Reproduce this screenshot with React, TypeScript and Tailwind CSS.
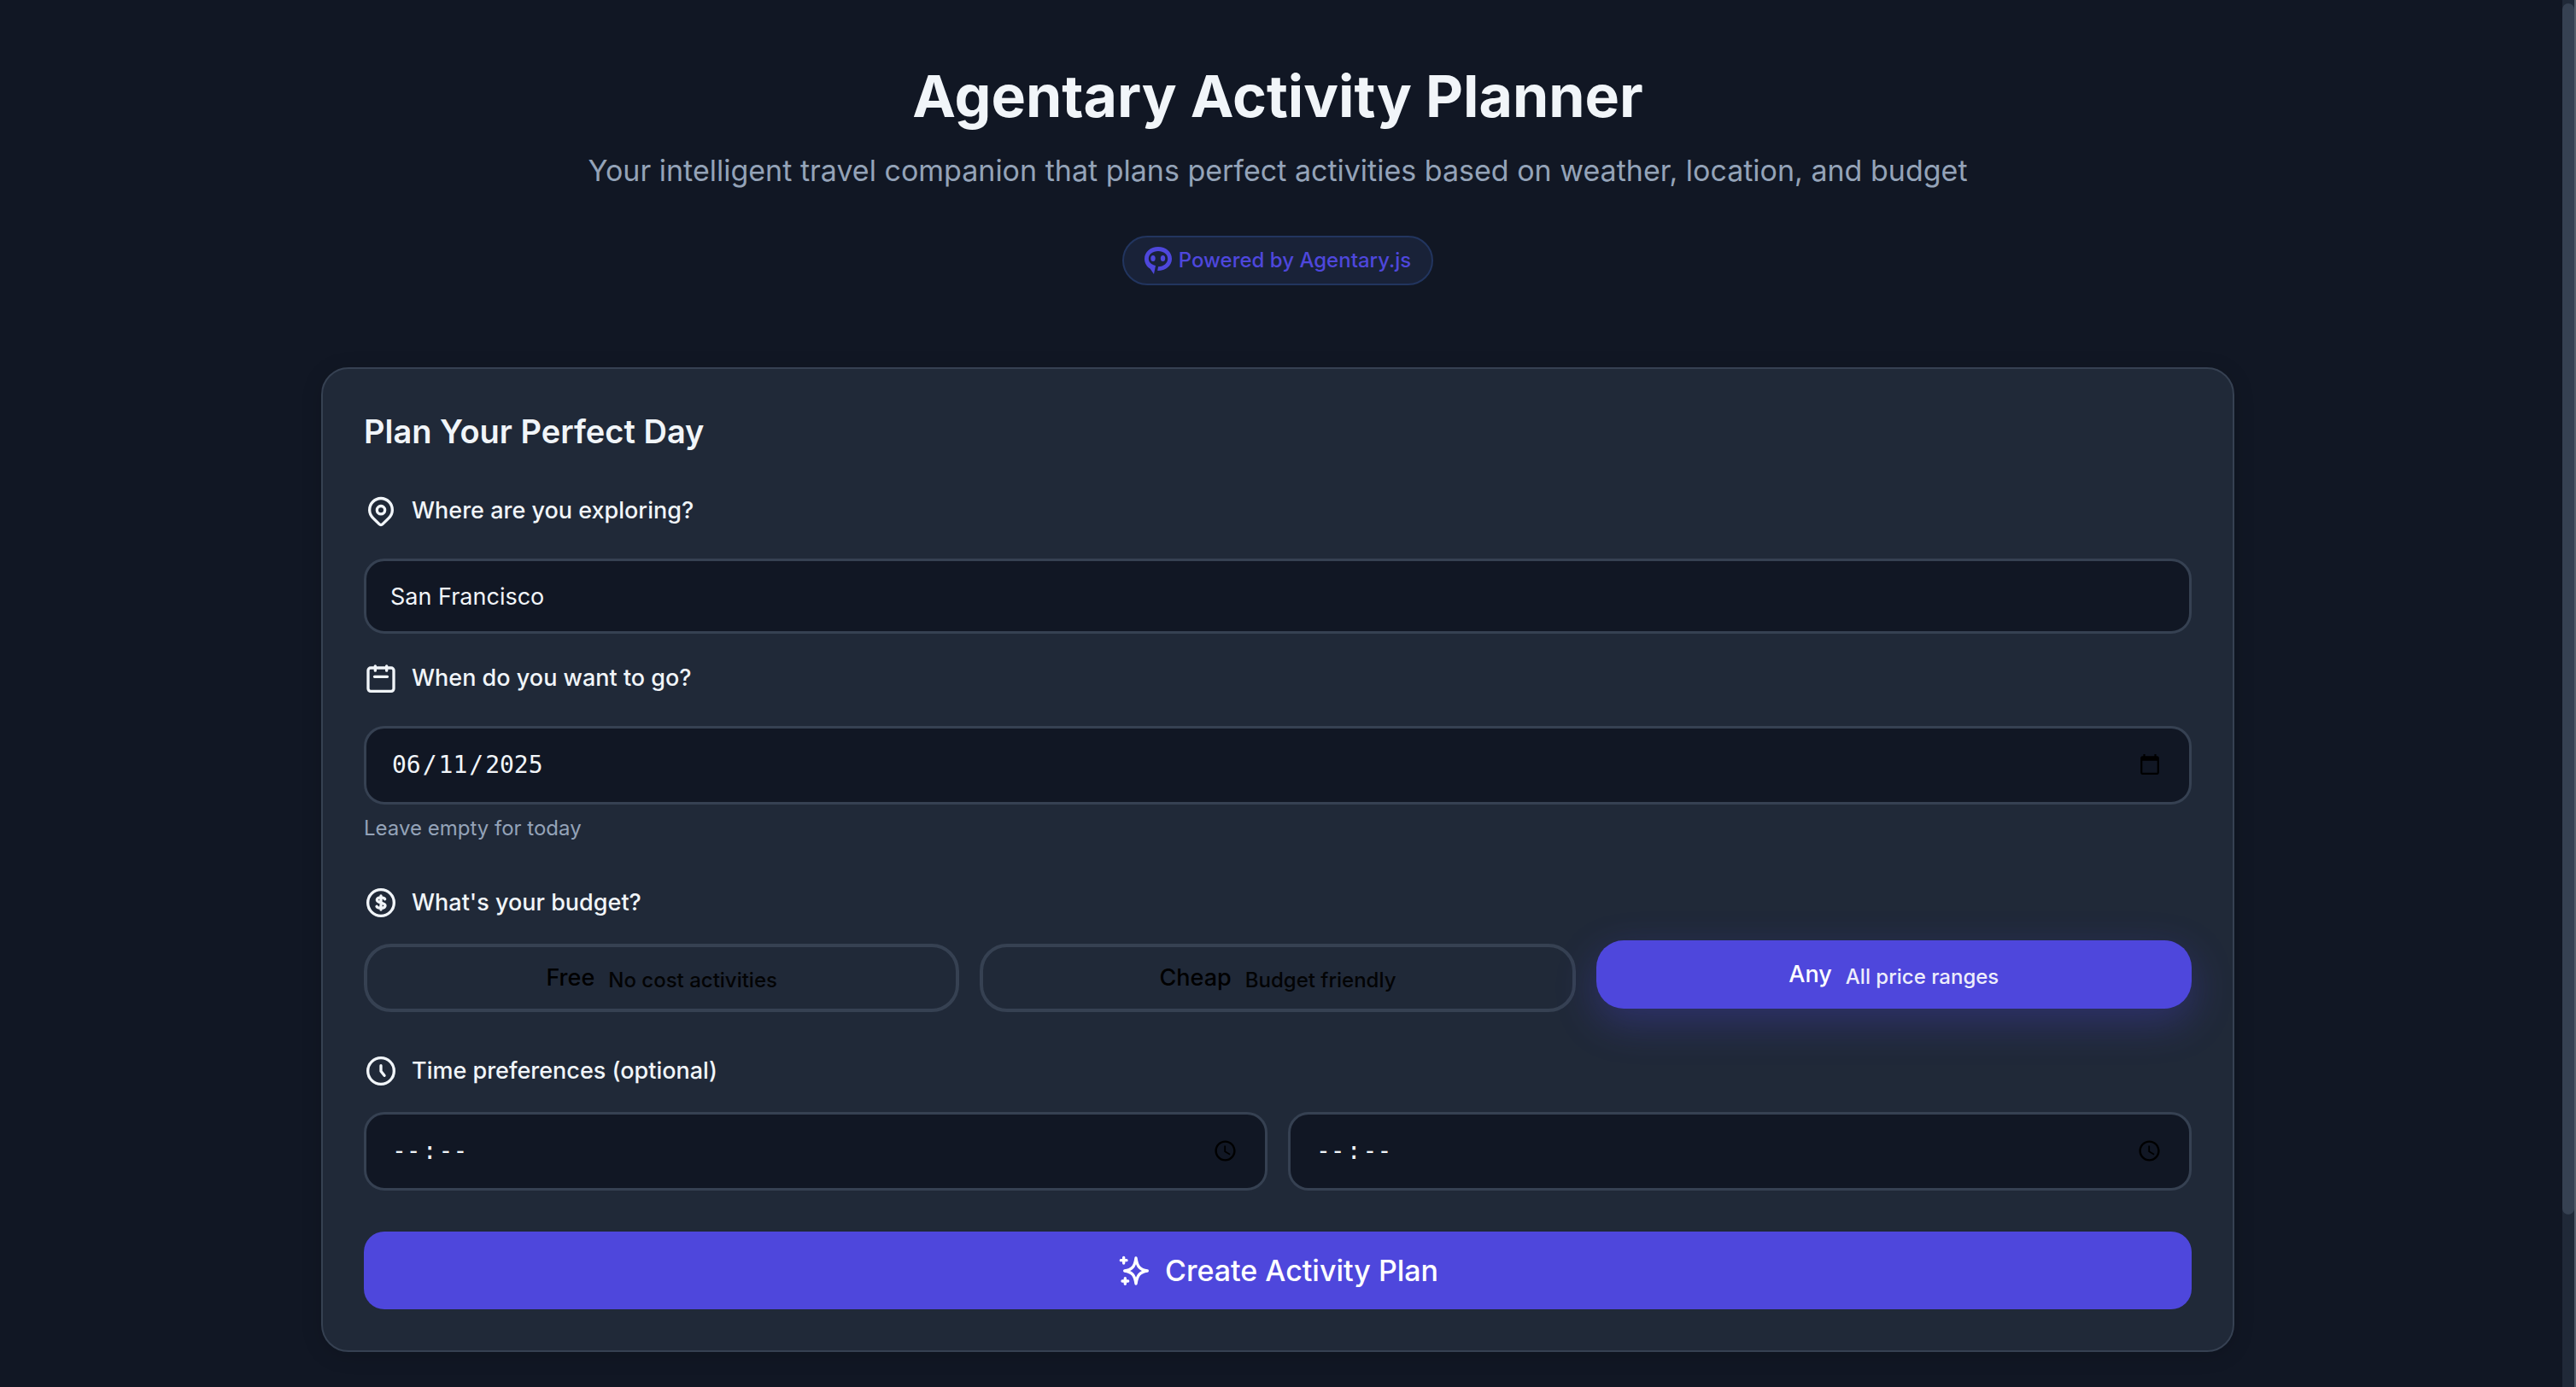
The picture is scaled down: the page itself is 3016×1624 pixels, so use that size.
import React, { useState } from "react";

const budgets = [
  { id: "free", name: "Free", note: "No cost activities" },
  { id: "cheap", name: "Cheap", note: "Budget friendly" },
  { id: "any", name: "Any", note: "All price ranges" },
];

const field =
  "block w-full rounded-[24px] border-[3px] border-[#364152] bg-[#111724] px-7 leading-8 text-[#f1f5f9] outline-none";
const mono =
  "h-[92px] text-[28px] font-['DejaVu_Sans_Mono',monospace] [&::-webkit-datetime-edit-ampm-field]:hidden [&::-webkit-calendar-picker-indicator]:p-1 [&::-webkit-datetime-edit-fields-wrapper]:p-0 [&::-webkit-datetime-edit-month-field]:px-[2px] [&::-webkit-datetime-edit-day-field]:px-[2px] [&::-webkit-datetime-edit-year-field]:px-[2px] [&::-webkit-datetime-edit-hour-field]:px-[2px] [&::-webkit-datetime-edit-minute-field]:px-[2px]";
const labelText = "flex items-center gap-4 text-[27px] leading-10 font-medium";

function Icon({ children }: { children: React.ReactNode }) {
  return (
    <svg
      className="size-10 shrink-0"
      viewBox="0 0 24 24"
      fill="none"
      stroke="currentColor"
      strokeWidth="2"
      strokeLinecap="round"
      strokeLinejoin="round"
      aria-hidden="true"
    >
      {children}
    </svg>
  );
}

function Header() {
  return (
    <header className="flex flex-col items-center text-center">
      <h1 className="text-[68px] leading-[80px] font-bold">Agentary Activity Planner</h1>
      <p className="mt-5 text-[34px] leading-[56px] text-[#94a3b8]">
        Your intelligent travel companion that plans perfect activities based on weather, location, and budget
      </p>
      <a
        href="#agentary"
        className="mt-12 flex h-[58px] items-center gap-2 rounded-full border-2 border-[#22355f] bg-[#192238] px-6 text-[24px] leading-8 font-medium text-[#4e47dc]"
      >
        <svg className="size-8" viewBox="0 0 32 32" fill="none" aria-hidden="true">
          <path
            d="M16 0C7 0 0 6 0 14c0 5.600 3 9.400 6.500 11.600L11 32l2-10C8 21 4.800 18 4.800 13.800 4.800 8.800 9.800 5 16 5s11.200 3.700 11.200 8.900c0 5.100-4.600 9-11.200 9.300l-.8 4.900C24.800 28.200 32 22 32 14S25 0 16 0Z"
            fill="currentColor"
          />
          <ellipse cx="10" cy="13.500" rx="2.700" ry="3.600" fill="currentColor" />
          <ellipse cx="21.500" cy="13.500" rx="2.700" ry="3.600" fill="currentColor" />
        </svg>
        Powered by Agentary.js
      </a>
    </header>
  );
}

function PlannerForm() {
  const [place, setPlace] = useState("San Francisco");
  const [date, setDate] = useState("2025-06-11");
  const [budget, setBudget] = useState("any");

  return (
    <form
      className="mt-24 w-full max-w-[2240px] rounded-[32px] border-2 border-[#364152] bg-[#202938] p-12 shadow-[0_4px_24px_rgba(0,0,0,0.15)]"
      onSubmit={(e) => e.preventDefault()}
    >
      <h2 className="text-[38px] leading-[50px] font-semibold">Plan Your Perfect Day</h2>

      <label htmlFor="place" className={`${labelText} mt-12`}>
        <Icon>
          <path d="M20 11.500c0 2.400-1.100 4.300-2.800 6l-4 3.900a1.700 1.700 0 0 1-2.400 0l-4-3.900C5.100 15.800 4 13.900 4 11.500a8 8.200 0 0 1 16 0Z" />
          <circle cx="12" cy="11.500" r="2.800" />
        </Icon>
        Where are you exploring?
      </label>
      <input
        id="place"
        type="text"
        value={place}
        onChange={(e) => setPlace(e.target.value)}
        className={`${field} mt-9 h-[88px] text-[27px]`}
      />

      <label htmlFor="date" className={`${labelText} mt-8`}>
        <Icon>
          <rect x="3" y="4.800" width="18" height="16.400" rx="1.800" />
          <path d="M8 3.500v3.200M16 3.500v3.200M7.500 11h9" />
        </Icon>
        When do you want to go?
      </label>
      <input
        id="date"
        type="date"
        value={date}
        onChange={(e) => setDate(e.target.value)}
        className={`${field} ${mono} mt-9`}
      />
      <p className="mt-3 text-[24px] leading-8 text-[#94a3b8]">Leave empty for today</p>

      <fieldset className="mt-[51px]">
        <legend className={labelText}>
          <Icon>
            <circle cx="12" cy="12" r="9.200" />
            <path d="M12 7.200v9.600M14.800 9.400c-.4-.8-1.300-1.100-2.800-1.100-1.600 0-2.800.6-2.800 1.800 0 2.400 5.800 1.400 5.800 3.900 0 1.200-1.200 1.800-3 1.800-1.500 0-2.500-.4-3-1.200" />
          </Icon>
          What's your budget?
        </legend>
        <div className="mt-7 grid grid-cols-3 gap-6">
          {budgets.map((b) => (
            <button
              key={b.id}
              type="button"
              aria-pressed={budget === b.id}
              onClick={() => setBudget(b.id)}
              className={
                budget === b.id
                  ? "flex h-20 -translate-y-1 items-center justify-center gap-4 rounded-[32px] bg-[#4e47dc] text-white shadow-[0_16px_48px_rgba(79,70,229,0.3)]"
                  : "flex h-20 items-center justify-center gap-4 rounded-[32px] border-4 border-[#364152] text-black"
              }
            >
              <span className="text-[27px] leading-8 font-medium">{b.name}</span>
              <span className="mt-[6px] text-[24px] leading-8 font-medium opacity-90">{b.note}</span>
            </button>
          ))}
        </div>
      </fieldset>

      <fieldset className="mt-[49px]">
        <legend className={labelText}>
          <Icon>
            <circle cx="12" cy="12" r="9.200" />
            <path d="M12 8.200v4l2.400 3" />
          </Icon>
          Time preferences (optional)
        </legend>
        <div className="mt-7 grid grid-cols-2 gap-6">
          <input type="time" aria-label="Start time" className={`${field} ${mono}`} />
          <input type="time" aria-label="End time" className={`${field} ${mono}`} />
        </div>
      </fieldset>

      <button
        type="submit"
        className="mt-12 flex h-[91px] w-full items-center justify-center gap-4 rounded-[24px] bg-[#4e47dc] text-[34px] leading-[44px] font-medium text-white"
      >
        <Icon>
          <path d="M13.200 3c.8 5.800 2.500 8.200 8 9-5.500.8-7.200 3.200-8 9-.8-5.800-2.500-8.200-8-9 5.500-.8 7.200-3.200 8-9Z" />
          <path d="M4.600 2.600v4M2.600 4.600h4M5.600 17.200v4M3.600 19.200h4" />
        </Icon>
        Create Activity Plan
      </button>
    </form>
  );
}

export default function App() {
  return (
    <div className="flex h-screen overflow-hidden bg-[#111724] font-['Inter',sans-serif] text-[#f1f5f9]">
      <main className="flex flex-1 flex-col items-center overflow-hidden pt-[72px] pr-2">
        <Header />
        <PlannerForm />
      </main>
      <div className="w-4 border-r-2 border-[#545c69] bg-[#202938]">
        <div className="mt-1 h-[1418px] w-full rounded-full bg-[#364152]" />
      </div>
    </div>
  );
}
